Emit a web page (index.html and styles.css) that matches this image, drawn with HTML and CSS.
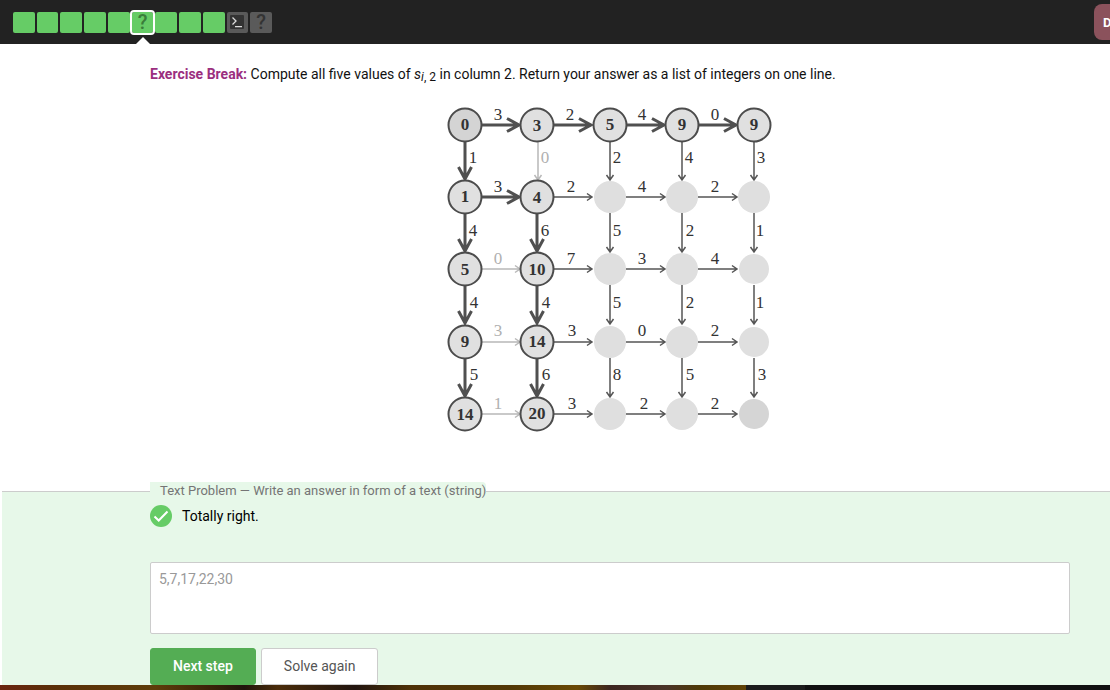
FILE: index.html
```html
<!DOCTYPE html>
<html lang="en">
<head>
<meta charset="utf-8">
<meta name="viewport" content="width=device-width, initial-scale=1">
<title>Exercise Break</title>
<link rel="stylesheet" href="styles.css">
</head>
<body>
<header class="topbar">
  <nav class="steps" aria-label="Lesson steps">
    <a class="step" href="#" aria-label="Step 1"></a>
    <a class="step" href="#" aria-label="Step 2"></a>
    <a class="step" href="#" aria-label="Step 3"></a>
    <a class="step" href="#" aria-label="Step 4"></a>
    <a class="step" href="#" aria-label="Step 5"></a>
    <a class="step step-active" href="#" aria-current="step">?</a>
    <a class="step" href="#" aria-label="Step 7"></a>
    <a class="step" href="#" aria-label="Step 8"></a>
    <a class="step" href="#" aria-label="Step 9"></a>
    <a class="step step-todo" href="#" aria-label="Step 10">
      <svg class="terminal" viewBox="0 0 14 14"><rect width="14" height="14" rx="1" fill="#333"/><path d="M2.5 2.500 6 6 2.500 9.500M5 11.700h7" fill="none" stroke="#ddd" stroke-width="1.300"/></svg>
    </a>
    <a class="step step-todo" href="#">?</a>
  </nav>
  <button class="side-button" type="button">D</button>
</header>

<main>
  <article class="lesson">
    <p class="task"><strong class="task-label">Exercise Break:</strong> Compute all five values of <i>s</i><sub><i>i</i>, 2</sub> in column 2. Return your answer as a list of integers on one line.</p>
    <svg class="graph" viewBox="0 0 340 340" role="img" aria-label="Weighted grid graph">
      <defs>
        <path id="thin" d="M16 0H55M50-3.500 55 0 50 3.500"/>
        <path id="bold" d="M17 0H54M42-6.500 54 0 42 6.500"/>
      </defs>
      <g class="edge-thin">
        <use href="#thin" x="97" y="97"/><use href="#thin" x="170" y="97"/><use href="#thin" x="242" y="97"/>
        <use href="#thin" x="97" y="169"/><use href="#thin" x="170" y="169"/><use href="#thin" x="242" y="169"/>
        <use href="#thin" x="97" y="242"/><use href="#thin" x="170" y="242"/><use href="#thin" x="242" y="242"/>
        <use href="#thin" x="97" y="314"/><use href="#thin" x="170" y="314"/><use href="#thin" x="242" y="314"/>
        <g transform="translate(170) rotate(90)"><use href="#thin" x="25"/><use href="#thin" x="97"/><use href="#thin" x="169"/><use href="#thin" x="242"/></g>
        <g transform="translate(242) rotate(90)"><use href="#thin" x="25"/><use href="#thin" x="97"/><use href="#thin" x="169"/><use href="#thin" x="242"/></g>
        <g transform="translate(314) rotate(90)"><use href="#thin" x="25"/><use href="#thin" x="97"/><use href="#thin" x="169"/><use href="#thin" x="242"/></g>
      </g>
      <g class="edge-faint">
        <use href="#thin" x="25" y="169"/><use href="#thin" x="25" y="242"/><use href="#thin" x="25" y="314"/>
        <use href="#thin" transform="translate(98 25) rotate(90)"/>
      </g>
      <g class="edge-bold">
        <use href="#bold" x="25" y="25"/><use href="#bold" x="97" y="25"/><use href="#bold" x="170" y="25"/><use href="#bold" x="242" y="25"/>
        <use href="#bold" x="25" y="97"/>
        <g transform="translate(25) rotate(90)"><use href="#bold" x="25"/><use href="#bold" x="97"/><use href="#bold" x="169"/><use href="#bold" x="242"/></g>
        <g transform="translate(97) rotate(90)"><use href="#bold" x="97"/><use href="#bold" x="169"/><use href="#bold" x="242"/></g>
      </g>
      <g class="node-empty">
        <circle cx="170" cy="97" r="16"/><circle cx="242" cy="97" r="16"/><circle cx="314" cy="97" r="16"/>
        <circle cx="170" cy="169" r="16"/><circle cx="242" cy="169" r="16"/><circle cx="314" cy="169" r="15"/>
        <circle cx="170" cy="242" r="16"/><circle cx="242" cy="242" r="16"/><circle cx="314" cy="242" r="15"/>
        <circle cx="170" cy="314" r="16"/><circle cx="242" cy="314" r="16"/><circle class="node-end" cx="314" cy="314" r="15"/>
      </g>
      <g class="node">
        <circle class="node-start" cx="25" cy="25" r="16.500"/><circle cx="97" cy="25" r="16.500"/><circle cx="170" cy="25" r="16.500"/><circle cx="242" cy="25" r="16.500"/><circle cx="314" cy="25" r="16.500"/>
        <circle cx="25" cy="97" r="16.500"/><circle cx="97" cy="97" r="16.500"/>
        <circle cx="25" cy="169" r="16.500"/><circle cx="97" cy="169" r="16.500"/>
        <circle cx="25" cy="242" r="16.500"/><circle cx="97" cy="242" r="16.500"/>
        <circle cx="25" cy="314" r="16.500"/><circle cx="97" cy="314" r="16.500"/>
      </g>
      <g class="value">
        <text x="25" y="30">0</text><text x="97" y="31">3</text><text x="170" y="30">5</text><text x="242" y="30">9</text><text x="314" y="30">9</text>
        <text x="25" y="102">1</text><text x="97" y="103">4</text>
        <text x="25" y="175">5</text><text x="97" y="175">10</text>
        <text x="25" y="247">9</text><text x="97" y="247">14</text>
        <text x="25" y="320">14</text><text x="97" y="319">20</text>
      </g>
      <g class="weight">
        <text x="58" y="20">3</text><text x="130" y="20">2</text><text x="202" y="20">4</text><text x="275" y="20">0</text>
        <text x="58" y="92">3</text><text x="131" y="92">2</text><text x="202" y="92">4</text><text x="275" y="92">2</text>
        <text class="faint" x="58" y="164">0</text><text x="131" y="164">7</text><text x="202" y="164">3</text><text x="275" y="164">4</text>
        <text class="faint" x="58" y="236">3</text><text x="132" y="236">3</text><text x="202" y="236">0</text><text x="275" y="236">2</text>
        <text class="faint" x="58" y="309">1</text><text x="132" y="309">3</text><text x="204" y="309">2</text><text x="275" y="309">2</text>
        <text x="33" y="63">1</text><text class="faint" x="105" y="63">0</text><text x="177" y="63">2</text><text x="249" y="63">4</text><text x="321" y="63">3</text>
        <text x="33" y="136">4</text><text x="105" y="136">6</text><text x="177" y="136">5</text><text x="250" y="136">2</text><text x="320" y="136">1</text>
        <text x="34" y="208">4</text><text x="106" y="208">4</text><text x="177" y="208">5</text><text x="250" y="208">2</text><text x="320" y="208">1</text>
        <text x="34" y="280">5</text><text x="106" y="280">6</text><text x="177" y="280">8</text><text x="250" y="280">5</text><text x="322" y="280">3</text>
      </g>
    </svg>
  </article>

  <form>
    <fieldset class="answer">
      <legend class="answer-title">Text Problem — Write an answer in form of a text (string)</legend>
      <p class="result">
        <svg class="check" viewBox="0 0 22 22"><circle cx="11" cy="11" r="11" fill="#6c6"/><path d="M4.500 11.500 8.700 15.500 17.500 6.500" fill="none" stroke="#fff" stroke-width="2"/></svg>
        Totally right.
      </p>
      <textarea class="reply" aria-label="Your answer" readonly>5,7,17,22,30</textarea>
      <div class="actions">
        <button class="button button-primary" type="button">Next step</button>
        <button class="button" type="button">Solve again</button>
      </div>
    </fieldset>
  </form>
</main>
<footer class="backdrop"></footer>
</body>
</html>
```
FILE: styles.css
```css
* {
  box-sizing: border-box;
}

body {
  margin: 0;
  background: #fff;
  color: #111;
  font: 14px/20px Roboto, sans-serif;
  overflow-x: hidden;
}

.topbar {
  display: flex;
  align-items: center;
  justify-content: space-between;
  height: 44px;
  padding-left: 13px;
  background: #222;
  overflow: hidden;
}

.steps {
  display: flex;
  gap: 2px;
  width: 259px;
}

.step {
  position: relative;
  display: flex;
  flex: 1;
  align-items: center;
  justify-content: center;
  height: 21px;
  border-radius: 2px;
  background: #6c6;
  color: #3a7d3a;
  font-size: 20px;
  font-weight: 500;
  text-decoration: none;
}

.step-active {
  outline: 2px solid #fff;
}

.step-active::after {
  content: "";
  position: absolute;
  top: 25px;
  left: 50%;
  margin-left: -8px;
  border: 8px solid transparent;
  border-top: 0;
  border-bottom-color: #fff;
}

.step-todo {
  background: #5a5a5a;
  color: #333;
}

.terminal {
  width: 14px;
  height: 14px;
}

.side-button {
  width: 24px;
  height: 36px;
  margin-right: -8px;
  padding: 0 0 0 9px;
  border: 0;
  border-radius: 8px 0 0 8px;
  background: #8b525c;
  color: #fff;
  font: bold 13px Roboto, sans-serif;
  text-align: left;
}

.lesson {
  padding: 20px 40px 42px 150px;
}

.task {
  margin: 0 0 16px;
}

.task-label {
  color: #9b2f7f;
}

.task sub {
  font-size: 12px;
  line-height: 0;
  vertical-align: -2px;
}

.graph {
  display: block;
  width: 340px;
  margin: 0 auto;
}

.edge-thin,
.edge-faint,
.edge-bold {
  fill: none;
  stroke: #555;
  stroke-width: 1.5;
}

.edge-faint {
  stroke: #b8b8b8;
}

.edge-bold {
  stroke: #505050;
  stroke-width: 3;
}

.node-empty {
  fill: #dfdfdf;
}

.node-empty .node-end {
  fill: #d5d5d5;
}

.node {
  fill: #e0e0e0;
  stroke: #4c4c4c;
  stroke-width: 2;
}

.node-start {
  fill: #d4d4d4;
}

.value,
.weight {
  fill: #333;
  font: 17px "Liberation Serif", serif;
  text-anchor: middle;
}

.value {
  font-weight: bold;
}

.weight .faint {
  fill: #b0b0b0;
}

.answer {
  min-width: 0;
  margin: 0 0 0 2px;
  padding: 5px 40px 0 148px;
  border: 0;
  border-top: 1px solid #ccc;
  background: #e7f8e9;
}

.answer-title {
  padding: 0 0 0 10px;
  border-radius: 0 4px 0 0;
  background: #e7f8e9;
  color: #757575;
  font-size: 13px;
  line-height: 18px;
}

.result {
  display: flex;
  align-items: center;
  gap: 10px;
  margin: 0 0 35px;
  color: #000;
}

.check {
  width: 22px;
  height: 22px;
}

.reply {
  display: block;
  width: 100%;
  height: 72px;
  padding: 6px 8px;
  border: 1px solid #ccc;
  border-radius: 2px;
  background: #fff;
  color: #999;
  font: inherit;
  resize: none;
}

.actions {
  display: flex;
  gap: 5px;
  margin-top: 14px;
}

.button {
  height: 37px;
  padding: 0 22px 2px;
  border: 1px solid #ccc;
  border-radius: 3px;
  background: #fff;
  color: #555;
  font: inherit;
}

.button-primary {
  border-color: #54ad54;
  background: #54ad54;
  color: #fff;
  font-weight: 500;
}

.backdrop {
  height: 5px;
  background: linear-gradient(90deg, #6b2410 0, #5a3008 5%, #5e3d0a 14%, #3a2208 19%, #20140c 22%, #4a2c0a 25%, #22150f 32%, #4f3208 37%, #523806 46%, #6a4a05 52%, #3c2620 55%, #4a3428 60%, #4f3a08 63%, #604206 67.200%, #1c1c1c 67.200%, #1c1c1c 72.500%, #111 72.500%);
}
```
